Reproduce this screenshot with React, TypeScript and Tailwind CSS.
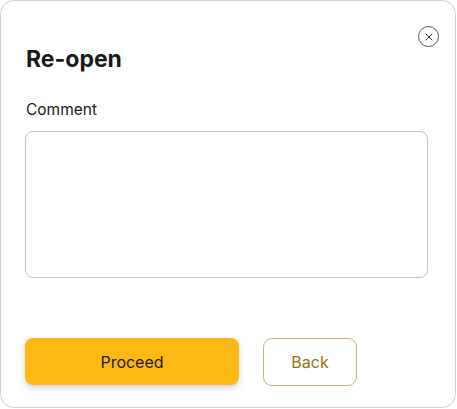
import React from "react";

export default function App() {
  return (
    <div className="w-[457px] h-[409px] bg-white" style={{ fontFamily: "Inter, 'Noto Sans', sans-serif" }}>
      <div className="relative w-[456px] h-[408px] rounded-[14px] border border-[#cfcfcf] bg-white px-[24px] pt-[43px] flex flex-col">
        <button className="absolute right-[16px] top-[25px] w-[21px] h-[21px] rounded-full border border-[#555] flex items-center justify-center">
          <svg width="8" height="8" viewBox="0 0 8 8" fill="none" stroke="#333" strokeWidth="1" strokeLinecap="round">
            <path d="M1 1L7 7M7 1L1 7" />
          </svg>
        </button>
        <h1 className="ml-[1px] text-[23px] leading-[30px] font-bold text-[#1b1a16] tracking-[0px]">Re-open</h1>
        <label className="ml-[1px] mt-[26px] text-[15.5px] leading-[20px] text-[#1b1a16]">Comment</label>
        <textarea className="mt-[11px] w-[403px] h-[147px] rounded-[8px] border border-[#c4c4c4] resize-none outline-none" />
        <div className="mt-[60px] flex gap-[24px]">
          <button className="w-[214px] h-[47px] rounded-[8px] bg-[#fdb814] text-[16px] text-[#1b1a16] shadow-[0_3px_6px_rgba(0,0,0,0.18)]">
            Proceed
          </button>
          <button className="w-[94px] h-[48px] rounded-[9px] border border-[#cdb27c] text-[16px] text-[#9a7214] bg-white">
            Back
          </button>
        </div>
      </div>
    </div>
  );
}
